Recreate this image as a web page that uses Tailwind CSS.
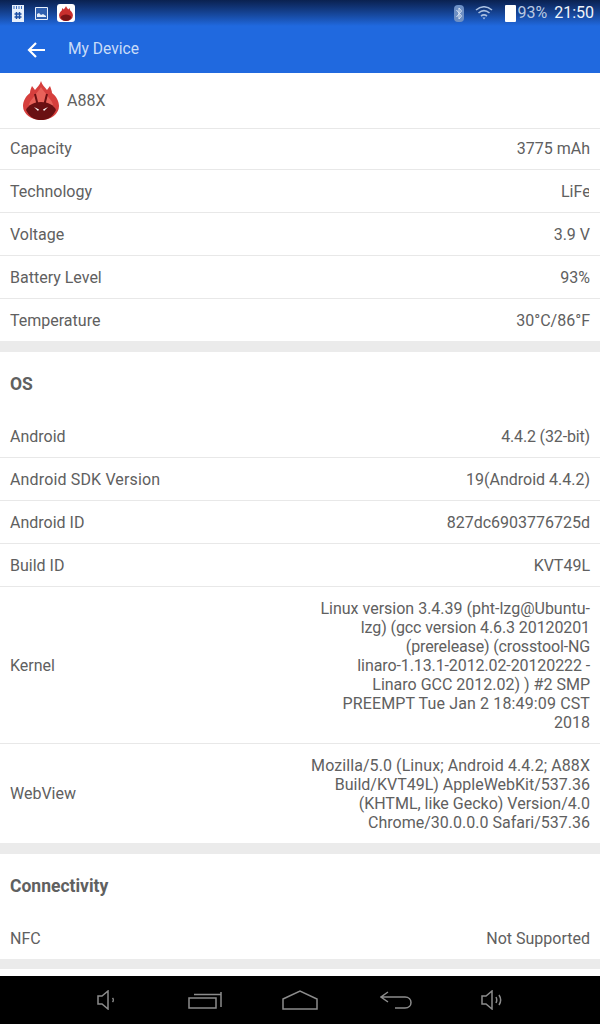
<!DOCTYPE html>
<html lang="en">
<head>
    <meta charset="UTF-8">
    <meta name="viewport" content="width=device-width, initial-scale=1.0">
    <script src="https://cdn.jsdelivr.net/npm/@tailwindcss/browser@4"></script>
    <title>My Device</title>
</head>
<body class="w-[600px] h-[1024px] overflow-hidden bg-white flex flex-col font-['Roboto',sans-serif] text-[16px] text-[#606060]">
    <!-- status bar + toolbar -->
    <div class="h-[73px] shrink-0 bg-[#2069df] flex flex-col">
        <div class="h-[26px] bg-gradient-to-b from-[#0a2150] to-[#2069df] flex items-center pl-[12px] pr-[6px] text-[#cfd9ea]">
            <svg class="w-[12px] h-[17px]" viewBox="0 0 12 17"><path d="M0 0h12v17H0z" fill="#e8f0fb"/><path d="M2 1v3M4.500 1v3M7 1v3M9.500 1v3" stroke="#3d6fc0"/><path d="M4.500 7v7M7.500 7v7M2.500 9h7M2.500 12h7" stroke="#1d4fa5" stroke-width="1.500"/></svg>
            <svg class="w-[13px] h-[13px] ml-[11px]" viewBox="0 0 13 13"><path d="M.5.500h12v12H.5z" fill="#2f5fae" stroke="#e8f0fb"/><path d="M2 10V7l2-1 2 2 2-1 3 2v1z" fill="#e8f0fb"/></svg>
            <div class="w-[18px] h-[18px] ml-[9px] bg-white rounded-[3px] flex items-center justify-center">
                <svg class="w-[14px] h-[15px]" viewBox="0 0 36 39"><path d="M18 0C19 4 22 6 24 9L27 5C28 8 29 10 29 12C33 15 36 20 36 25A18 14 0 0 1 0 25C0 20 3 15 7 12C7 10 8 7 9 5L12 9C14 6 17 4 18 0Z" fill="#c92f2e"/><path d="M4 30C6 24 12 22 18 22C24 22 30 24 32 30C28 37 23 39 18 39C13 39 8 37 4 30Z" fill="#7a1416"/></svg>
            </div>
            <svg class="w-[10px] h-[17px] ml-auto" viewBox="0 0 10 17"><rect width="10" height="17" rx="4" fill="#6d8fc4"/><path d="M2.500 5l5 6-2.500 3V3l2.500 3-5 6" fill="none" stroke="#dbe5f3"/></svg>
            <svg class="w-[18px] h-[14px] ml-[11px]" viewBox="0 0 18 14" fill="none" stroke="#a9bfe0" stroke-width="1.600"><path d="M1 4c5-4 11-4 16 0M3.500 7c3.500-3 7.500-3 11 0M6 10c2-1.500 4-1.500 6 0"/><path d="M7.500 11.500h3L9 13.500z" fill="#a9bfe0" stroke="none"/></svg>
            <div class="w-[11px] h-[17px] ml-[12px] bg-white rounded-[1px]"></div>
            <span class="ml-[1px] text-[16px] text-[#b9c9e2]">93%</span>
            <span class="ml-[7px] text-[16px] text-[#f0f4fa]">21:50</span>
        </div>
        <div class="flex-1 flex items-center pl-[27px] text-[#c9dcf8] text-[15.6px]">
            <svg class="w-[18px] h-[16px]" viewBox="0 0 18 16" fill="none" stroke="white" stroke-width="2.200"><path d="M18 8H2M9 1L2 8l7 7"/></svg>
            <span class="ml-[23px]">My Device</span>
        </div>
    </div>

    <!-- device name -->
    <div class="h-[56px] shrink-0 flex items-center pl-[23px] border-b border-[#e8e8e8]">
        <svg class="w-[36px] h-[39px]" viewBox="0 0 36 39">
            <path d="M18 0C19 4 22 6 24 9L27 5C28 8 29 10 29 12C33 15 36 20 36 25A18 14 0 0 1 0 25C0 20 3 15 7 12C7 10 8 7 9 5L12 9C14 6 17 4 18 0Z" fill="#d63f3d"/>
            <path d="M18 6C20 10 24 13 26 17C29 20 31 24 31 30H5C5 24 7 20 10 17C12 13 16 10 18 6Z" fill="#e8625a"/>
            <path d="M12 13L14.500 23M24 13L21.500 23" stroke="#6a1013" stroke-width="2"/>
            <path d="M3 29C5 24 11 21 18 21C25 21 31 24 33 29C29 37 24 39 18 39C12 39 7 37 3 29Z" fill="#6a1013"/>
            <path d="M11 26l5 2.500-1 1.500zM25 26l-5 2.500 1 1.500z" fill="white"/>
        </svg>
        <span class="ml-[8px]">A88X</span>
    </div>

    <!-- battery -->
    <div class="h-[41px] shrink-0 flex items-center justify-between px-[10px] border-b border-[#e8e8e8]"><span>Capacity</span><span>3775 mAh</span></div>
    <div class="h-[43px] shrink-0 flex items-center justify-between px-[10px] pt-[2px] border-b border-[#e8e8e8]"><span>Technology</span><span class="w-[28px] mr-[1px] overflow-hidden whitespace-nowrap">LiFe</span></div>
    <div class="h-[43px] shrink-0 flex items-center justify-between px-[10px] pt-[2px] border-b border-[#e8e8e8]"><span>Voltage</span><span>3.9 V</span></div>
    <div class="h-[43px] shrink-0 flex items-center justify-between px-[10px] pt-[2px] border-b border-[#e8e8e8]"><span>Battery Level</span><span>93%</span></div>
    <div class="h-[42px] shrink-0 flex items-center justify-between px-[10px] pt-[1px]"><span>Temperature</span><span>30°C/86°F</span></div>
    <div class="h-[11px] shrink-0 bg-[#ebebeb]"></div>

    <!-- os -->
    <div class="h-[63px] shrink-0 flex items-center px-[10px] pt-[2px] text-[17.5px] font-bold">OS</div>
    <div class="h-[43px] shrink-0 flex items-center justify-between px-[10px] pt-[2px] border-b border-[#e8e8e8]"><span>Android</span><span class="tracking-[-0.15px]">4.4.2 (32-bit)</span></div>
    <div class="h-[43px] shrink-0 flex items-center justify-between px-[10px] pt-[2px] border-b border-[#e8e8e8]"><span class="tracking-[0.15px]">Android SDK Version</span><span>19(Android 4.4.2)</span></div>
    <div class="h-[43px] shrink-0 flex items-center justify-between px-[10px] pt-[2px] border-b border-[#e8e8e8]"><span>Android ID</span><span>827dc6903776725d</span></div>
    <div class="h-[43px] shrink-0 flex items-center justify-between px-[10px] pt-[2px] border-b border-[#e8e8e8]"><span>Build ID</span><span>KVT49L</span></div>
    <div class="h-[157px] shrink-0 flex items-center justify-between px-[10px] border-b border-[#e8e8e8]">
        <span class="mt-[2px]">Kernel</span>
        <div class="text-right leading-[19px] whitespace-nowrap">Linux version 3.4.39 (pht-lzg@Ubuntu-<br><span class="tracking-[-0.1px]">lzg) (gcc version 4.6.3 20120201</span><br><span class="tracking-[-0.15px]">(prerelease) (crosstool-NG</span><br><span class="tracking-[-0.1px]">linaro-1.13.1-2012.02-20120222 -</span><br>Linaro GCC 2012.02) ) #2 SMP<br><span class="tracking-[0.13px]">PREEMPT Tue Jan 2 18:49:09 CST</span><br>2018</div>
    </div>
    <div class="h-[99px] shrink-0 flex items-center justify-between px-[10px]">
        <span>WebView</span>
        <div class="text-right leading-[19px] whitespace-nowrap"><span class="tracking-[0.08px]">Mozilla/5.0 (Linux; Android 4.4.2; A88X</span><br>Build/KVT49L) AppleWebKit/537.36<br>(KHTML, like Gecko) Version/4.0<br>Chrome/30.0.0.0 Safari/537.36</div>
    </div>
    <div class="h-[11px] shrink-0 bg-[#ebebeb]"></div>

    <!-- connectivity -->
    <div class="h-[63px] shrink-0 flex items-center px-[10px] pt-[2px] text-[17.5px] font-bold">Connectivity</div>
    <div class="h-[42px] shrink-0 flex items-center justify-between px-[10px] pt-[2px]"><span>NFC</span><span>Not Supported</span></div>
    <div class="h-[10px] shrink-0 bg-[#ebebeb]"></div>
    <div class="flex-1"></div>

    <!-- nav bar -->
    <div class="h-[48px] shrink-0 bg-black flex items-center pl-[97px]">
        <svg class="w-[18px] h-[20px]" viewBox="0 0 18 20" fill="none" stroke="#8c8c8c" stroke-width="1.500"><path d="M1 6h4l6-5v18l-6-5H1zM15.500 8c1 1 1 3 0 4"/></svg>
        <svg class="w-[34px] h-[18px] ml-[73px]" viewBox="0 0 34 18" fill="none" stroke="#8c8c8c" stroke-width="1.500"><path d="M1 7h27v10H1zM6 3.500h27M33 1v15"/></svg>
        <svg class="w-[36px] h-[20px] ml-[60px]" viewBox="0 0 36 20" fill="none" stroke="#8c8c8c" stroke-width="1.500"><path d="M1 9L18 1l17 8v10H1z"/></svg>
        <svg class="w-[32px] h-[18px] ml-[62px]" viewBox="0 0 32 18" fill="none" stroke="#8c8c8c" stroke-width="1.500"><path d="M8 1L1 6l7 5M1 6h24c8 0 8 11 0 11H15"/></svg>
        <svg class="w-[22px] h-[20px] ml-[69px]" viewBox="0 0 22 20" fill="none" stroke="#8c8c8c" stroke-width="1.500"><path d="M1 6h4l6-5v18l-6-5H1zM15 7c1 2 1 4 0 6M18 5c2 3 2 7 0 10"/></svg>
    </div>
</body>
</html>
